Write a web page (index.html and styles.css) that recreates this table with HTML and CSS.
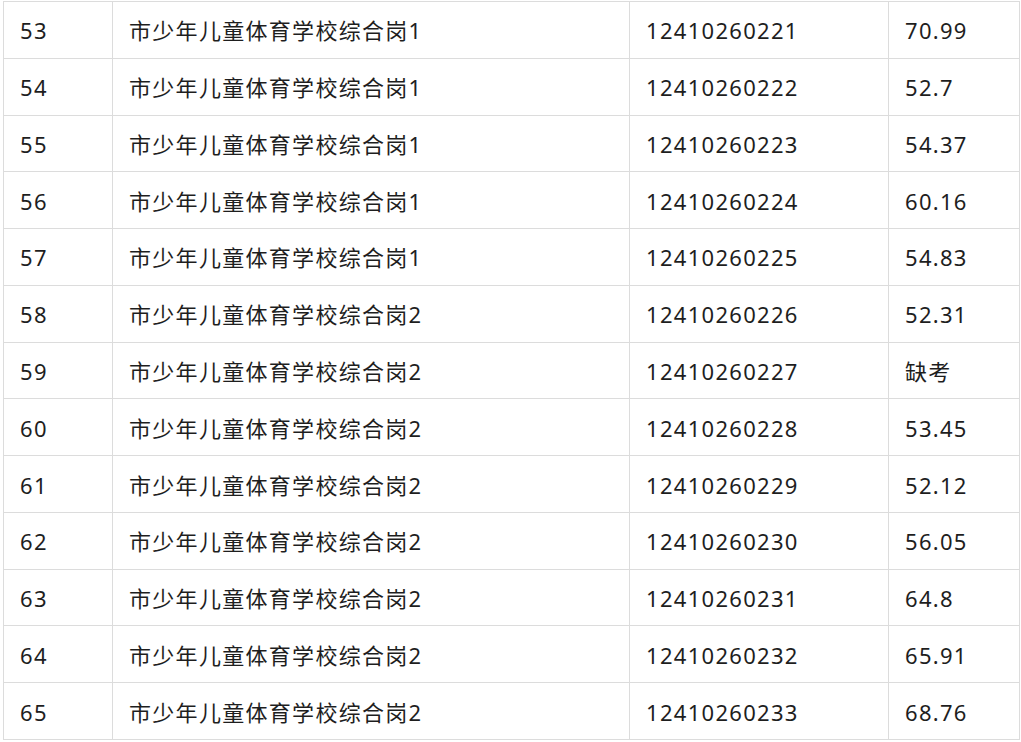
FILE: index.html
```html
<!DOCTYPE html>
<html lang="zh-CN">
<head>
<meta charset="utf-8">
<link rel="stylesheet" href="styles.css">
</head>
<body>
<div class="wrap">
<table class="score-table">
<colgroup><col class="c1"><col class="c2"><col class="c3"><col class="c4"></colgroup>
<tbody>
<tr><td>53</td><td>市少年儿童体育学校综合岗1</td><td>12410260221</td><td>70.99</td></tr>
<tr><td>54</td><td>市少年儿童体育学校综合岗1</td><td>12410260222</td><td>52.7</td></tr>
<tr><td>55</td><td>市少年儿童体育学校综合岗1</td><td>12410260223</td><td>54.37</td></tr>
<tr><td>56</td><td>市少年儿童体育学校综合岗1</td><td>12410260224</td><td>60.16</td></tr>
<tr><td>57</td><td>市少年儿童体育学校综合岗1</td><td>12410260225</td><td>54.83</td></tr>
<tr><td>58</td><td>市少年儿童体育学校综合岗2</td><td>12410260226</td><td>52.31</td></tr>
<tr><td>59</td><td>市少年儿童体育学校综合岗2</td><td>12410260227</td><td>缺考</td></tr>
<tr><td>60</td><td>市少年儿童体育学校综合岗2</td><td>12410260228</td><td>53.45</td></tr>
<tr><td>61</td><td>市少年儿童体育学校综合岗2</td><td>12410260229</td><td>52.12</td></tr>
<tr><td>62</td><td>市少年儿童体育学校综合岗2</td><td>12410260230</td><td>56.05</td></tr>
<tr><td>63</td><td>市少年儿童体育学校综合岗2</td><td>12410260231</td><td>64.8</td></tr>
<tr><td>64</td><td>市少年儿童体育学校综合岗2</td><td>12410260232</td><td>65.91</td></tr>
<tr><td>65</td><td>市少年儿童体育学校综合岗2</td><td>12410260233</td><td>68.76</td></tr>
</tbody>
</table>
</div>
</body>
</html>
```

FILE: styles.css
```css
html, body {
  margin: 0;
  padding: 0;
  background: #ffffff;
}
.wrap {
  padding: 1px 0 0 3px;
}
.score-table {
  width: 1016px;
  border-collapse: collapse;
  table-layout: fixed;
  font-family: "Noto Sans", "Noto Sans CJK SC", sans-serif;
  font-size: 22px;
  letter-spacing: 1.3px;
  color: #1e1e1e;
}
.c1 { width: 109px; }
.c2 { width: 517px; }
.c3 { width: 259px; }
.c4 { width: 131px; }
.score-table td {
  border: 1px solid #dcdcdc;
  height: 56.77px;
  padding: 1px 0 0 16px;
  vertical-align: middle;
  white-space: nowrap;
  box-sizing: border-box;
  line-height: 30px;
}
```
